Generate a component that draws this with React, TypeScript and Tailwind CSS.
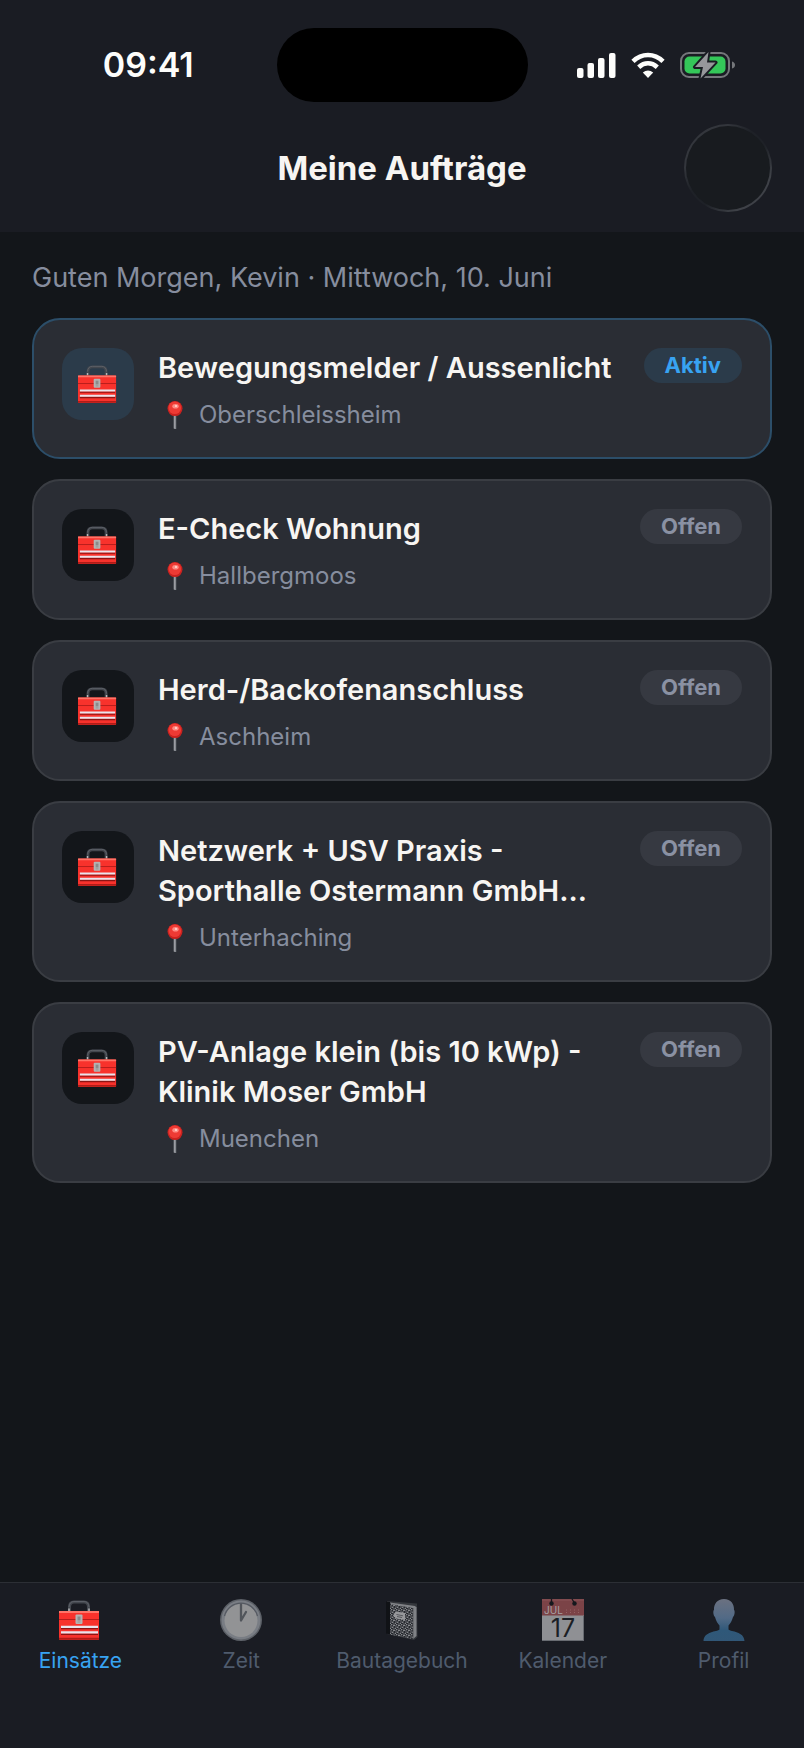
import { useState, type ReactNode } from "react";

type Job = { title: string; place: string; active?: boolean };

const jobs: Job[] = [
  { title: "Bewegungsmelder / Aussenlicht", place: "Oberschleissheim", active: true },
  { title: "E-Check Wohnung", place: "Hallbergmoos" },
  { title: "Herd-/Backofenanschluss", place: "Aschheim" },
  { title: "Netzwerk + USV Praxis - Sporthalle Ostermann GmbH...", place: "Unterhaching" },
  { title: "PV-Anlage klein (bis 10 kWp) - Klinik Moser GmbH", place: "Muenchen" },
];

function Toolbox({ className }: { className: string }) {
  return (
    <svg viewBox="1 0 42 42" className={className} aria-hidden="true">
      <path d="M11.500 12V8Q11.500 3 16 3h10Q30.500 3 30.500 8V12" fill="none" stroke="#43474e" strokeWidth="3" />
      <path d="M11 8Q11.500 2.500 16 2.500h10Q30.500 2.500 31 8" fill="none" stroke="#62666d" strokeWidth=".8" />
      <path d="M11 9.500v2.500M31 9.500v2.500" stroke="#b8b8ba" strokeWidth="1.500" />
      <rect x="1" y="12" width="40" height="29" rx="1" fill="#f8322c" />
      <path d="M1 13h40" stroke="#ff7468" strokeWidth="2" />
      <path d="M1 20.500h40" stroke="#b51e1b" strokeWidth="1" />
      <path d="M1 39.800h40" stroke="#b01c18" strokeWidth="2" />
      <path d="M3 29.500h37M3 35.200h37" stroke="#8d1514" strokeWidth="1.500" />
      <path d="M3 27.800h37M3 33.300h37" stroke="#e9e4ec" strokeWidth="2.200" />
      <rect x="17.500" y="15.500" width="7" height="9.500" rx="1" fill="#b4b3b3" />
      <path d="M19.500 17.500h3v4h-3z" fill="#8b8b8b" />
      <path d="M19.500 23h3" stroke="#959595" strokeWidth="1" />
    </svg>
  );
}

function Pin() {
  return (
    <svg viewBox="0 0 16 28" className="h-7 w-4" aria-hidden="true">
      <path d="M8 13v15" stroke="#85888e" strokeWidth="2.400" />
      <path d="M7.300 14v13" stroke="#acaeb2" strokeWidth=".7" />
      <circle cx="8" cy="7.600" r="7.500" fill="#c9221f" />
      <circle cx="7.800" cy="6.800" r="6.300" fill="#ee3a34" />
      <ellipse cx="8.500" cy="5.300" rx="3.200" ry="2.300" fill="#ff8a83" />
      <circle cx="9" cy="5" r="1.100" fill="#ffd6d2" />
    </svg>
  );
}

function Clock({ className }: { className: string }) {
  return (
    <svg viewBox="0 0 42 42" className={className} aria-hidden="true">
      <circle cx="21" cy="21" r="21" fill="#5d6168" />
      <circle cx="21" cy="21" r="19.500" fill="#797d84" />
      <circle cx="21" cy="21.500" r="16.500" fill="#929395" />
      <path d="M4.500 17A17 17 0 0 1 37.500 17" fill="none" stroke="#555961" strokeWidth="1.200" />
      <path d="M21 5.500v16l5-8.500" fill="none" stroke="#51555b" strokeWidth="2.300" strokeLinejoin="round" strokeLinecap="round" />
    </svg>
  );
}

function Notebook({ className }: { className: string }) {
  return (
    <svg viewBox="0 0 42 42" className={className} aria-hidden="true">
      <defs>
        <pattern id="speckle" width="5" height="5" patternUnits="userSpaceOnUse">
          <rect width="5" height="5" fill="#4b4d52" />
          <path d="M0 0h1v1H0zM2 1h2v1H2zM1 3h1v1H1zM4 4h1v1H4z" fill="#85878b" />
          <path d="M1 1h1v1H1zM3 2h1v2H3zM0 4h2v1H0zM4 0h1v1H4z" fill="#26292e" />
        </pattern>
      </defs>
      <path d="M6 2 36 4.500 36.500 38 33 41 6 35z" fill="#34373c" />
      <path d="M9 3.500 34 7 35.500 8.500V37l-3.500 3z" fill="#808286" />
      <path d="M9 5 32 9v31L9 35.500z" fill="url(#speckle)" />
      <path d="M5 2.500 9 3v32.500l-4-1z" fill="#101216" />
      <path d="M32 9v31" stroke="#4c4f54" strokeWidth=".8" />
      <path d="M15 12.500 24 14v7l-9-1.500-2-2v-3z" fill="#96979a" />
      <path d="M15.500 15.500l6.500 1.300M16 17.500l5 1" stroke="#56585d" strokeWidth="1" />
    </svg>
  );
}

function Calendar({ className }: { className: string }) {
  return (
    <svg viewBox="0 0 42 42" overflow="visible" className={className} aria-hidden="true">
      <rect width="42" height="42" fill="#8f9094" />
      <rect width="42" height="16.500" fill="#7b4347" />
      <path d="M0 1h42" stroke="#8b5558" strokeWidth="1" />
      <path d="M9.500 0v4M30 0l2.500 4" stroke="#15181d" strokeWidth="1.300" />
      <circle cx="9.500" cy="4.500" r="2.200" fill="#15181d" />
      <circle cx="32.500" cy="4.500" r="2.200" fill="#15181d" />
      <text x="2" y="14.700" fontSize="10" fontWeight="400" fill="#a7a1a5">JUL</text>
      <path d="M24 11h16M24 13.500h16" stroke="#946265" strokeDasharray="1 3" />
      <text x="21" y="38" textAnchor="middle" fontSize="25" fontWeight="400" fill="#1b1e25">17</text>
      <path d="M0 41.500h42M41.500 17v25" stroke="#686b71" />
    </svg>
  );
}

function Person({ className }: { className: string }) {
  return (
    <svg viewBox="0 0 42 42" className={className} aria-hidden="true">
      <defs>
        <linearGradient id="bust" x1="0" y1="0" x2="0" y2="1">
          <stop offset="0" stopColor="#6b7180" />
          <stop offset=".45" stopColor="#526a86" />
          <stop offset=".75" stopColor="#2f5879" />
          <stop offset="1" stopColor="#315777" />
        </linearGradient>
      </defs>
      <path
        d="M21 0C14 0 10.800 5 11 11c-1 .5-1 5 1 7 1 4 3 7 4.500 8.500v4C14 33 1 32 .5 42h41C41 32 28 33 25.500 30.500v-4C27 25 29 22 30 18c2-2 2-6.500 1-7C31.200 5 28 0 21 0Z"
        fill="url(#bust)"
      />
    </svg>
  );
}

function StatusIcons() {
  return (
    <div className="flex items-center gap-[15px]" role="img" aria-label="Signal, WLAN, Akku lädt">
      <svg viewBox="0 0 40 26" className="h-[26px] w-10" fill="#fdfdfb">
        <rect x="1" y="16" width="6.500" height="10" rx="2" />
        <rect x="11.500" y="11" width="6.500" height="15" rx="2" />
        <rect x="22" y="6" width="6.500" height="20" rx="2" />
        <rect x="33" y="1" width="6.500" height="25" rx="2" />
      </svg>
      <svg viewBox="0 0 34 26" className="h-[26px] w-[34px]" fill="none" stroke="#fdfdfb" strokeWidth="4.600">
        <path d="M2 9.300Q8.500 3 17 3T32 9.300" />
        <path d="M7.700 15.200Q12 11.300 17 11.300T26.300 15.200" />
        <path d="M17 26 11.800 20.600Q17 16.600 22.200 20.600Z" fill="#fdfdfb" stroke="none" />
      </svg>
      <svg viewBox="0 0 55 28" className="h-7 w-[55px]">
        <rect x="1" y="2" width="48" height="24" rx="8" fill="none" stroke="#75777b" strokeWidth="2" />
        <rect x="4.500" y="5.500" width="41" height="17" rx="5" fill="#34c759" />
        <path d="M52 10.500q3 1 3 3.500t-3 3.500z" fill="#75777b" />
        <path
          d="M28.500 1 15 16h8L20.500 27.500 35.500 11.500H27z"
          fill="#96979b"
          stroke="#1a1c23"
          strokeWidth="4"
          strokeLinejoin="round"
          paintOrder="stroke"
        />
      </svg>
    </div>
  );
}

function JobCard({ job }: { job: Job }) {
  return (
    <li
      className={`flex items-start gap-6 rounded-[28px] border-2 bg-[#2a2d34] p-7 ${
        job.active ? "border-[#2c4e69]" : "border-[#3a3d43]"
      }`}
    >
      <div
        className={`flex size-[72px] shrink-0 items-center justify-center rounded-[20px] ${
          job.active ? "bg-[#2b3b4a]" : "bg-[#13161a]"
        }`}
      >
        <Toolbox className="size-10" />
      </div>
      <div className="min-w-0 flex-1">
        <h2 className="text-[29px] leading-10 font-semibold text-[#f7f5f2]">{job.title}</h2>
        <p className="mt-3 flex items-center gap-4 pl-[9px] text-2xl leading-[29px] text-[#868d9e]">
          <Pin />
          {job.place}
        </p>
      </div>
      <span
        className={`shrink-0 rounded-full px-[21px] text-[22px] leading-[35px] font-bold ${
          job.active ? "bg-[#2b3b4a] text-[#38a3f2]" : "bg-[#363941] text-[#8a91a3]"
        }`}
      >
        {job.active ? "Aktiv" : "Offen"}
      </span>
    </li>
  );
}

const iconSize = "size-[42px]";
const tabs: { label: string; icon: ReactNode }[] = [
  { label: "Einsätze", icon: <Toolbox className={iconSize} /> },
  { label: "Zeit", icon: <Clock className={iconSize} /> },
  { label: "Bautagebuch", icon: <Notebook className={iconSize} /> },
  { label: "Kalender", icon: <Calendar className={iconSize} /> },
  { label: "Profil", icon: <Person className={iconSize} /> },
];

export default function App() {
  const [current, setCurrent] = useState("Einsätze");
  return (
    <div className="flex min-h-screen flex-col bg-[#13161a] font-['Inter',sans-serif]">
      <header className="bg-[#1a1c23] pb-5">
        <div className="grid grid-cols-[1fr_251px_1fr] items-center pt-7">
          <time className="pl-5 text-center text-[34px] leading-10 font-semibold text-[#fdfdfb]">09:41</time>
          <div className="h-[74px] rounded-full bg-black" />
          <div className="flex justify-center pr-5">
            <StatusIcons />
          </div>
        </div>
        <div className="mt-[22px] grid grid-cols-[88px_1fr_88px] items-center px-8">
          <h1 className="col-start-2 text-center text-[33px] leading-10 font-bold text-[#f7f5f2]">Meine Aufträge</h1>
          <button
            type="button"
            aria-label="Aktionen"
            className="size-[88px] rounded-full bg-[linear-gradient(135deg,#33363c_0%,#33363c_25%,#1e2127_42%,#1e2127_58%,#3e4147_78%,#3e4147_100%)] p-[2px]"
          >
            <span className="block size-full rounded-full bg-[#181b1f]" />
          </button>
        </div>
      </header>

      <main className="flex-1 px-8 pt-[26px] pb-8">
        <p className="text-[27px] leading-10 text-[#868d9e]">Guten Morgen, Kevin · Mittwoch, 10. Juni</p>
        <ul className="mt-5 flex flex-col gap-5">
          {jobs.map((job) => (
            <JobCard key={job.title} job={job} />
          ))}
        </ul>
      </main>

      <nav className="grid grid-cols-5 border-t border-[#2c2f35] bg-[#1a1c23] pt-4 pb-[73px]">
        {tabs.map(({ label, icon }) => (
          <button
            key={label}
            type="button"
            aria-current={current === label ? "page" : undefined}
            onClick={() => setCurrent(label)}
            className={`flex flex-col items-center gap-[6px] text-[21px] leading-7 ${
              current === label ? "text-[#38a3f2]" : "text-[#4f5b6d]"
            }`}
          >
            {icon}
            {label}
          </button>
        ))}
      </nav>
    </div>
  );
}
